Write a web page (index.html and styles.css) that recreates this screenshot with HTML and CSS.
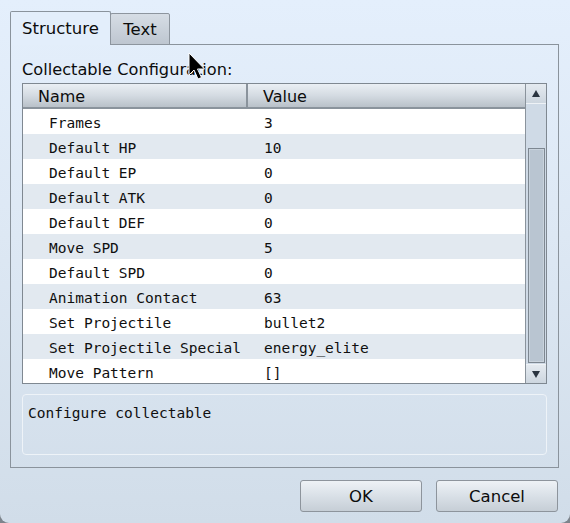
FILE: index.html
```html
<!DOCTYPE html>
<html>
<head>
<meta charset="utf-8">
<link rel="stylesheet" href="styles.css">
</head>
<body>
<div class="window">
  <div class="tabs">
    <div class="tab active">Structure</div>
    <div class="tab">Text</div>
  </div>
  <div class="pane">
    <div class="label">Collectable Configuration:</div>
    <div class="table">
      <div class="grid">
        <div class="head">
          <div class="hcell name">Name</div>
          <div class="hcell value">Value</div>
        </div>
        <div class="row"><span class="k">Frames</span><span class="v">3</span></div>
        <div class="row alt"><span class="k">Default HP</span><span class="v">10</span></div>
        <div class="row"><span class="k">Default EP</span><span class="v">0</span></div>
        <div class="row alt"><span class="k">Default ATK</span><span class="v">0</span></div>
        <div class="row"><span class="k">Default DEF</span><span class="v">0</span></div>
        <div class="row alt"><span class="k">Move SPD</span><span class="v">5</span></div>
        <div class="row"><span class="k">Default SPD</span><span class="v">0</span></div>
        <div class="row alt"><span class="k">Animation Contact</span><span class="v">63</span></div>
        <div class="row"><span class="k">Set Projectile</span><span class="v">bullet2</span></div>
        <div class="row alt"><span class="k">Set Projectile Special</span><span class="v">energy_elite</span></div>
        <div class="row"><span class="k">Move Pattern</span><span class="v">[]</span></div>
      </div>
      <div class="scrollbar">
        <div class="sbtn"><svg width="10" height="9" viewBox="0 0 10 9"><path d="M5 1 L9 8 L1 8 Z" fill="#2a3440"/></svg></div>
        <div class="track"><div class="thumb"></div></div>
        <div class="sbtn down"><svg width="10" height="9" viewBox="0 0 10 9"><path d="M1 1 L9 1 L5 8 Z" fill="#2a3440"/></svg></div>
      </div>
    </div>
    <div class="desc">Configure collectable</div>
  </div>
  <div class="buttons">
    <div class="btn">OK</div>
    <div class="btn">Cancel</div>
  </div>
  <svg class="cursor" width="18" height="29" viewBox="0 0 18 29"><path d="M1 1 L1 23 L6 18 L10 27 L13.5 25.5 L9.5 17 L16.5 17 Z" fill="#000" stroke="#fff" stroke-width="1"/></svg>
</div>
</body>
</html>
```
FILE: styles.css
```css
html {
  margin: 0;
  background: #7d848c;
}
body {
  margin: 0;
  width: 570px;
  height: 523px;
  overflow: hidden;
}
.window {
  position: relative;
  box-sizing: border-box;
  width: 570px;
  height: 523px;
  padding: 11px 11px 0 10px;
  background: linear-gradient(#e4effc 0%, #dde8f4 45%, #d1dde9 100%);
  border-radius: 0 0 9px 9px;
  font-family: "DejaVu Sans", sans-serif;
  font-size: 16.5px;
  color: #0c0c0c;
}
.tabs {
  display: flex;
  align-items: flex-end;
  height: 34px;
  margin-bottom: -1px;
  position: relative;
  z-index: 1;
}
.tab {
  box-sizing: border-box;
  border: 1px solid #8a939c;
  border-radius: 2px 2px 0 0;
  display: flex;
  align-items: center;
  justify-content: center;
}
.tab.active {
  width: 101px;
  height: 34px;
  border-bottom: none;
  background: #e3eefb;
  padding-bottom: 1px;
}
.tab:not(.active) {
  width: 60px;
  height: 32px;
  margin-left: -1px;
  background: linear-gradient(#d6dde5, #bec6d0);
  border-color: #8d959e;
  padding-top: 1px;
}
.pane {
  box-sizing: border-box;
  height: 424px;
  border: 1px solid #8a939c;
  padding: 0 11px;
  display: flex;
  flex-direction: column;
}
.label {
  height: 38px;
  line-height: 18px;
  padding-top: 16px;
  box-sizing: border-box;
  font-size: 16.2px;
}
.table {
  display: flex;
  height: 301px;
  box-sizing: border-box;
  border: 1px solid #7f8891;
  background: #fff;
}
.grid {
  width: 503px;
  border-right: 1px solid #8a939c;
}
.head {
  display: flex;
  height: 25px;
  box-sizing: border-box;
  border-bottom: 2px solid #8a939c;
  background: linear-gradient(#eaeff4, #d4dbe2 50%, #b9c1c9);
  font-size: 16px;
}
.hcell {
  display: flex;
  align-items: center;
  padding-top: 1px;
}
.hcell.name {
  width: 225px;
  padding-left: 15px;
  box-sizing: border-box;
  border-right: 2px solid #8a939c;
}
.hcell.value {
  padding-left: 15px;
}
.row {
  display: flex;
  height: 25px;
  align-items: center;
  padding-top: 2px;
  box-sizing: border-box;
  font-family: "DejaVu Sans Mono", monospace;
  font-size: 14.5px;
  color: #0f0f0f;
}
.row.alt {
  background: #e2e9f0;
}
.k {
  width: 241px;
  padding-left: 26px;
  box-sizing: border-box;
}
.scrollbar {
  width: 20px;
  display: flex;
  flex-direction: column;
  background: #cfdae6;
}
.sbtn {
  height: 19px;
  display: flex;
  align-items: center;
  justify-content: center;
  background: linear-gradient(#e4eaf0, #cdd6df);
  border-bottom: 1px solid #eef2f6;
}
.sbtn.down {
  border-bottom: none;
  border-top: 1px solid #eef2f6;
  height: 18px;
}
.track {
  flex: 1;
  padding: 44px 1px 1px 2px;
  display: flex;
}
.thumb {
  flex: 1;
  box-sizing: border-box;
  border: 1px solid #7d8791;
  box-shadow: inset 0 0 0 1px #c9d3dd;
  background: #b9c5d1;
}
.desc {
  margin-top: 10px;
  height: 61px;
  box-sizing: border-box;
  border: 1px solid #eef3f8;
  border-radius: 4px;
  padding: 10px 5px;
  font-family: "DejaVu Sans Mono", monospace;
  font-size: 14.5px;
  color: #0f0f0f;
}
.buttons {
  display: flex;
  justify-content: flex-end;
  gap: 14px;
  padding: 12px 1px 0 0;
}
.btn {
  box-sizing: border-box;
  width: 122px;
  height: 32px;
  border: 1px solid #8d949c;
  border-radius: 3px;
  background: linear-gradient(#eef2f6, #d9e0e7 50%, #c6ced6);
  display: flex;
  align-items: center;
  justify-content: center;
  font-size: 16.5px;
  padding-top: 1px;
}
.cursor {
  position: absolute;
  left: 188px;
  top: 52px;
}
```
